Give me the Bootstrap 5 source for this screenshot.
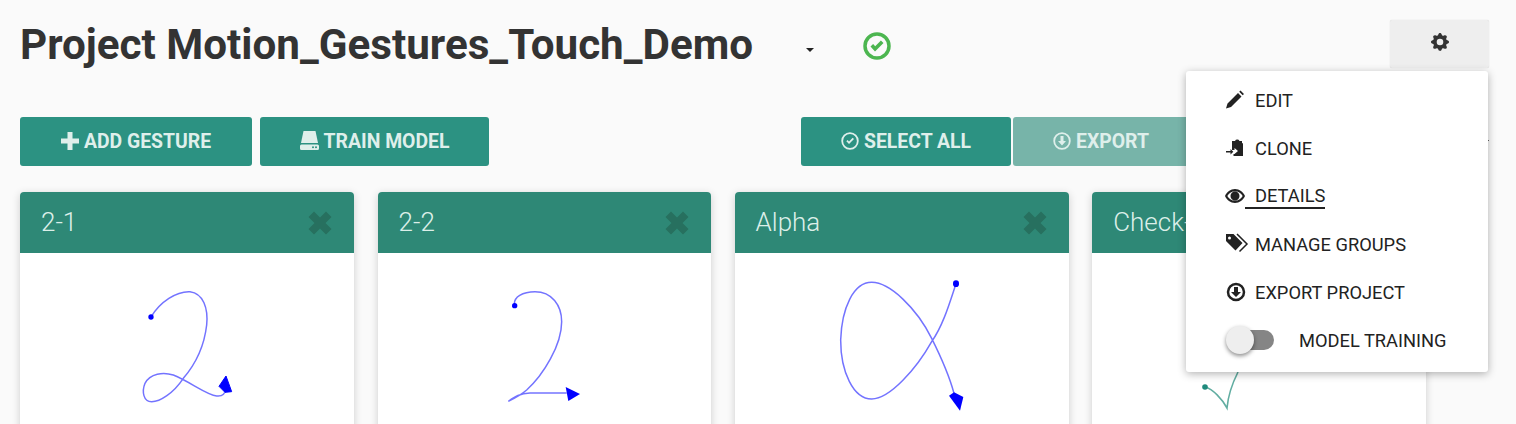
<!DOCTYPE html>
<html lang="en">
<head>
    <meta charset="UTF-8">
    <meta name="viewport" content="width=device-width, initial-scale=1.0">
    <title>Project Motion_Gestures_Touch_Demo</title>
    <!-- Bootstrap CSS -->
    <link href="https://cdn.jsdelivr.net/npm/bootstrap@5.3.3/dist/css/bootstrap.min.css" rel="stylesheet">
    <style>
        html, body { height: 424px; overflow: hidden; }
        body { background: #fafafa; font-family: Roboto, "Liberation Sans", sans-serif; color: #333; position: relative; }
        .page-wrap { padding: 20px 27px 0 20px; }
        .head-row { height: 48px; }
        .project-title { font-size: 42.2px; font-weight: 700; line-height: 48px; margin: 2px 0 0; color: #333; width: 786px; }
        .title-caret { width: 0; height: 0; border-left: 4px solid transparent; border-right: 4px solid transparent; border-top: 4px solid #222; margin-top: 12px; }
        .status-ok { margin-left: 49px; margin-top: 4px; width: 28px; height: 28px; }
        .gear-btn { width: 99px; height: 48px; background: #eee; border-radius: 2px; box-shadow: 0 0 1px rgba(0,0,0,.2); padding-top: 9px; text-align: center; }
        .tool-row { margin-top: 49px; height: 49px; }
        .tool-btn { height: 49px; background: #2c9282; color: #dfefeb; border: 0; border-radius: 3px; font-size: 19.4px; font-weight: 700; padding: 0; display: flex; align-items: center; justify-content: center; gap: 5px; }
        .tool-btn:hover { background: #2c9282; color: #dfefeb; }
        .tool-btn svg { margin-bottom: 2px; }
        .btn-add { width: 232px; }
        .btn-train { width: 229px; margin-left: 8px; }
        .btn-select { width: 210px; margin-left: auto; }
        .btn-export { width: 176px; margin-left: 2px; margin-right: 300px; background: #77b4a9; }
        .edge-tick { position: absolute; left: 1487px; top: 140px; width: 2px; height: 1px; background: #666; }
        .gesture-grid { display: grid; grid-template-columns: 334px 333.4px 334px 334px; column-gap: 23.6px; margin-top: 26px; }
        .gesture-card { background: #fff; border: 0; border-radius: 4px 4px 0 0; box-shadow: 0 2px 8px rgba(0,0,0,.18); }
        .gesture-head { height: 61px; background: #2e8876; color: #dcefe9; border-radius: 4px 4px 0 0; font-size: 26px; font-weight: 300; padding: 0 22px 0 21px; display: flex; align-items: center; justify-content: space-between; }
        .gesture-body { height: 240px; }
        .gesture-body svg { display: block; }
        .stroke-line { fill: none; stroke: #00f; stroke-opacity: .55; stroke-width: 4.5; }
        .stroke-check { fill: none; stroke: #2c9282; stroke-opacity: .75; stroke-width: 1.6; }
        .side-menu { top: 71px; left: 1186px; width: 302px; height: 301px; padding: 6px 0 0; margin: 0; border: 0; border-radius: 3px; box-shadow: 0 2px 8px rgba(0,0,0,.3); }
        .side-menu .dropdown-item { height: 48px; padding: 0 0 0 39px; display: flex; align-items: center; color: #222; font-size: 18.3px; }
        .menu-icon { width: 20px; height: 20px; margin-right: 10px; margin-bottom: 2px; flex: none; overflow: visible; }
        .item-line { border-bottom: 2px solid #222; line-height: 22px; padding-left: 10px; margin-left: -10px; }
        .train-toggle { position: relative; width: 46px; height: 20px; background: #858585; border-radius: 10px; margin: 0 25px 2px 3px; flex: none; }
        .train-knob { position: absolute; left: -2px; top: -4px; width: 28px; height: 28px; border-radius: 50%; background: #eee; box-shadow: 0 2px 4px rgba(0,0,0,.45); }
    </style>
</head>
<body>

    <div class="page-wrap">
        <div class="head-row d-flex align-items-center">
            <h1 class="project-title">Project Motion_Gestures_Touch_Demo</h1>
            <span class="title-caret"></span>
            <svg class="status-ok" viewBox="0 0 28 28">
                <circle cx="14" cy="14" r="12" fill="none" stroke="#4cb650" stroke-width="3.500"/>
                <path d="M7.500 14.500l4.500 5 8.500-8.500-2.600-2.600-5.700 5.800-2.100-2.300z" fill="#4cb650"/>
            </svg>
            <div class="gear-btn ms-auto">
                <svg width="18" height="18" viewBox="0 0 16 16"><path fill="#333" d="M9.405 1.05c-.413-1.4-2.397-1.4-2.81 0l-.1.34a1.464 1.464 0 0 1-2.105.872l-.31-.17c-1.283-.698-2.686.705-1.987 1.987l.169.311c.446.82.023 1.841-.872 2.105l-.34.1c-1.4.413-1.4 2.397 0 2.81l.34.1a1.464 1.464 0 0 1 .872 2.105l-.17.31c-.698 1.283.705 2.686 1.987 1.987l.311-.169a1.464 1.464 0 0 1 2.105.872l.1.34c.413 1.4 2.397 1.4 2.81 0l.1-.34a1.464 1.464 0 0 1 2.105-.872l.31.17c1.283.698 2.686-.705 1.987-1.987l-.169-.311a1.464 1.464 0 0 1 .872-2.105l.34-.1c1.4-.413 1.4-2.397 0-2.81l-.34-.1a1.464 1.464 0 0 1-.872-2.105l.17-.31c.698-1.283-.705-2.686-1.987-1.987l-.311.169a1.464 1.464 0 0 1-2.105-.872l-.1-.34zM8 10.93a2.929 2.929 0 1 1 0-5.86 2.929 2.929 0 0 1 0 5.858z"/></svg>
            </div>
        </div>

        <div class="tool-row d-flex">
            <button class="btn tool-btn btn-add">
                <svg width="18" height="18" viewBox="0 0 18 18"><path fill="#dfefeb" d="M6.500 0h5v6.500H18v5h-6.500V18h-5v-6.500H0v-5h6.500z"/></svg>
                ADD GESTURE
            </button>
            <button class="btn tool-btn btn-train">
                <svg width="19" height="19" viewBox="0 0 19 19"><path fill="#dfefeb" d="M3.500 0h12l2.500 12H1z"/><path fill="#dfefeb" fill-rule="evenodd" d="M1.500 13.500h16a1.500 1.500 0 0 1 1.500 1.500v2.500a1.500 1.500 0 0 1-1.500 1.500h-16A1.500 1.500 0 0 1 0 17.500V15a1.500 1.500 0 0 1 1.500-1.500zM13 15.200a1 1 0 1 0 0 2 1 1 0 0 0 0-2zm3 0a1 1 0 1 0 0 2 1 1 0 0 0 0-2z"/></svg>
                TRAIN MODEL
            </button>
            <button class="btn tool-btn btn-select">
                <svg width="18" height="18" viewBox="0 0 18 18"><circle cx="9" cy="9" r="7.800" fill="none" stroke="#dfefeb" stroke-width="1.800"/><path d="M5.300 9.300l2.700 2.700 5-5-1.300-1.300-3.700 3.700-1.400-1.400z" fill="#dfefeb"/></svg>
                SELECT ALL
            </button>
            <button class="btn tool-btn btn-export">
                <svg width="18" height="18" viewBox="0 0 18 18"><circle cx="9" cy="9" r="7.800" fill="none" stroke="#dfefeb" stroke-width="1.800"/><path d="M7.500 4h3v5h2.500l-4 4.500-4-4.500h2.500z" fill="#dfefeb"/></svg>
                EXPORT
            </button>
        </div>
        <span class="edge-tick"></span>

        <div class="gesture-grid">
            <div class="card gesture-card">
                <div class="gesture-head">2-1
                    <svg width="24" height="24" viewBox="0 0 24 24"><path fill="#27705f" d="M6 .500l6 6 6-6 5.500 5.500-6 6 6 6-5.500 5.500-6-6-6 6-5.500-5.500 6-6-6-6z"/></svg>
                </div>
                <div class="gesture-body">
                    <svg width="334" height="171" viewBox="60 204 1002 513">
                        <path class="stroke-line" d="M453 396C480 350 530 318 570 320C610 325 625 370 620 420C612 490 580 545 550 580C520 625 480 650 455 650C430 650 425 620 435 595C450 565 490 560 520 570C570 590 620 630 650 633C670 635 675 625 678 610"/>
                        <circle cx="453" cy="396" r="8" fill="#00f"/>
                        <path d="M678 573L695 620L675 622L657 604z" fill="#00f" stroke="#00f" stroke-width="3" stroke-linejoin="round"/>
                    </svg>
                </div>
            </div>
            <div class="card gesture-card">
                <div class="gesture-head">2-2
                    <svg width="24" height="24" viewBox="0 0 24 24"><path fill="#27705f" d="M6 .500l6 6 6-6 5.500 5.500-6 6 6 6-5.500 5.500-6-6-6 6-5.500-5.500 6-6-6-6z"/></svg>
                </div>
                <div class="gesture-body">
                    <svg width="333" height="171" viewBox="24 204 999 513">
                        <path class="stroke-line" d="M434 362C428 335 460 320 495 320C545 320 575 360 575 410C575 480 520 570 470 615C450 632 430 642 415 649C435 635 450 625 480 624L590 624"/>
                        <circle cx="434" cy="362" r="8" fill="#00f"/>
                        <path d="M587 606L630 627L595 648z" fill="#00f"/>
                    </svg>
                </div>
            </div>
            <div class="card gesture-card">
                <div class="gesture-head">Alpha
                    <svg width="24" height="24" viewBox="0 0 24 24"><path fill="#27705f" d="M6 .500l6 6 6-6 5.500 5.500-6 6 6 6-5.500 5.500-6-6-6 6-5.500-5.500 6-6-6-6z"/></svg>
                </div>
                <div class="gesture-body">
                    <svg width="334" height="171" viewBox="15 204 1002 513">
                        <path class="stroke-line" d="M678 296C660 350 640 420 605 470C560 550 480 642 425 642C370 642 332 560 332 465C335 370 370 292 425 292C480 292 560 370 605 460C635 520 660 580 672 625"/>
                        <ellipse cx="678" cy="296" rx="9" ry="10" fill="#00f"/>
                        <path d="M657 632L672 622L700 636L690 677z" fill="#00f"/>
                    </svg>
                </div>
            </div>
            <div class="card gesture-card">
                <div class="gesture-head">Check-1</div>
                <div class="gesture-body">
                    <svg width="334" height="171" viewBox="1092 253 334 171">
                        <path class="stroke-check" d="M1205 387C1213 389 1222 399 1227 408C1228 396 1232 384 1238 372"/>
                        <circle cx="1205" cy="387" r="2.800" fill="#1f8a7c"/>
                    </svg>
                </div>
            </div>
        </div>
    </div>

    <ul class="dropdown-menu show side-menu position-absolute">
        <li><a class="dropdown-item" href="#">
            <svg class="menu-icon" viewBox="0 0 20 20"><path fill="#222" d="M1 18.500l1.500-5L13 3l3.500 3.500L6 17zM14.200 1.800L15.500.500l3.500 3.500-1.300 1.300z"/></svg>
            EDIT</a></li>
        <li><a class="dropdown-item" href="#">
            <svg class="menu-icon" viewBox="0 0 20 20"><path fill="#222" fill-rule="evenodd" d="M7 3h3a2.500 2.500 0 0 1 4.500 0H17v2l1 .5V18H8.500v-2h1l3.500-3-3.500-3v2H7zM1 13h4.500v-2l2.800 2.800-2.800 2.700v-2H1z"/></svg>
            CLONE</a></li>
        <li><a class="dropdown-item" href="#">
            <svg class="menu-icon" viewBox="0 0 20 20"><path fill="#222" fill-rule="evenodd" d="M10 3c4.500 0 8.200 3 10 7-1.800 4-5.500 7-10 7s-8.200-3-10-7c1.800-4 5.500-7 10-7zm0 2.200C7 5.200 4 7 2.300 10 4 13 7 14.800 10 14.800s6-1.800 7.700-4.800C16 7 13 5.200 10 5.200zm0 .3a4.500 4.500 0 1 1 0 9 4.500 4.500 0 0 1 0-9z"/></svg>
            <span class="item-line">DETAILS</span></a></li>
        <li><a class="dropdown-item" href="#">
            <svg class="menu-icon" viewBox="0 0 20 20"><path fill="#222" fill-rule="evenodd" d="M1 0h7.500l9 9-7 7.500L1 7zM4.500 2.500a1.500 1.500 0 1 0 0 3 1.500 1.500 0 0 0 0-3z"/><path fill="none" stroke="#222" stroke-width="1.500" d="M12 0l10 10-7.500 7.500"/></svg>
            MANAGE GROUPS</a></li>
        <li><a class="dropdown-item" href="#">
            <svg class="menu-icon" viewBox="0 0 20 20"><circle cx="11" cy="10" r="8" fill="none" stroke="#222" stroke-width="2.500"/><path fill="#222" d="M9 5h4v5h3l-5 5-5-5h3z"/></svg>
            EXPORT PROJECT</a></li>
        <li><div class="dropdown-item">
            <span class="train-toggle"><span class="train-knob"></span></span>
            MODEL TRAINING</div></li>
    </ul>

</body>
</html>
